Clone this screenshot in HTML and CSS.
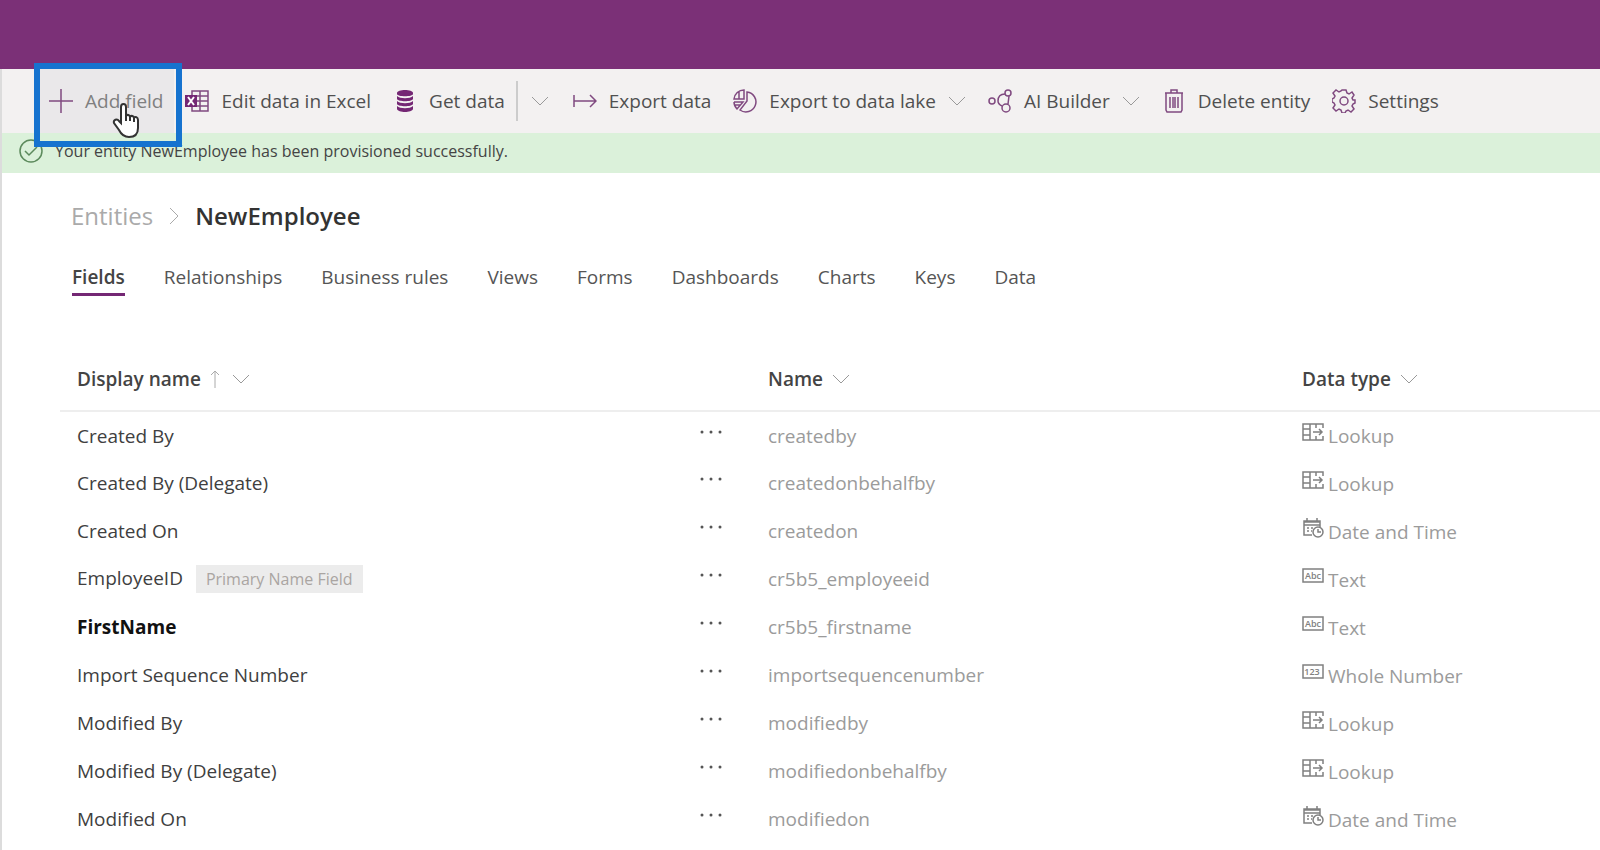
FILE: index.html
```
<!DOCTYPE html>
<html lang="en">
<head>
  <meta charset="UTF-8">
  <meta name="viewport" content="width=device-width, initial-scale=1.0">
  <title>NewEmployee - Entities</title>
  <link rel="stylesheet" href="styles.css">
</head>
<body>

  <!-- Shared icons -->
  <svg class="icon-defs" aria-hidden="true">
    <symbol id="i-chevron" viewBox="0 0 18 10"><path d="M1 1l8 8 8-8"/></symbol>
    <symbol id="i-dots" viewBox="0 0 22 4"><circle cx="2" cy="2" r="1.5"/><circle cx="11" cy="2" r="1.5"/><circle cx="20" cy="2" r="1.5"/></symbol>
    <symbol id="i-lookup" viewBox="0 0 22 18">
      <path d="M21 5V1H1v16h20v-4M1 6h7M1 12h7M8 1v16M14 1v4M14 13v4M11 9h9M17 6l3 3-3 3"/>
    </symbol>
    <symbol id="i-date" viewBox="0 0 22 20">
      <path d="M10 17H2V3h16v6M2 4h16M2 7h16M5 0v4M15 0v4M5 10h2M9 10h2M5 13h2M9 13h1"/>
      <circle cx="16" cy="14" r="5"/><path d="M16 11v3h3"/>
    </symbol>
    <symbol id="i-text" viewBox="0 0 22 16"><rect x="1" y="1" width="20" height="13"/><text x="11" y="11" text-anchor="middle">Abc</text></symbol>
    <symbol id="i-number" viewBox="0 0 22 16"><rect x="1" y="1" width="20" height="13"/><text x="10" y="11" text-anchor="middle">123</text></symbol>
  </svg>

  <header class="top-bar"></header>

  <div class="page">
    <div class="toolbar">
      <button class="tool add-field">
        <svg class="icon" viewBox="0 0 24 24"><path d="M12 0v24M0 12h24"/></svg>
        Add field
      </button>
      <button class="tool">
        <svg class="icon" viewBox="0 0 24 24">
          <path d="M7 6V2h16v20H7v-4M7 7h16M7 12h16M7 17h16M15 2v20"/>
          <path class="solid" d="M0 6h12v12H0z"/><path class="cut" d="M3 8l6 8M9 8l-6 8"/>
        </svg>
        Edit data in Excel
      </button>
      <div class="split">
        <button class="tool">
          <svg class="icon" viewBox="0 0 24 24">
            <path class="solid" d="M4 4c0-4 16-4 16 0v1c0 3-16 3-16 0z"/>
            <path class="solid" d="M4 7c3 3 13 3 16 0v3c-1 3-15 3-16 0zM4 12c3 3 13 3 16 0v3c-1 3-15 3-16 0zM4 17c3 3 13 3 16 0v3c-1 4-15 4-16 0z"/>
          </svg>
          Get data
        </button>
        <button class="more" aria-label="More data options"><svg class="chevron"><use href="#i-chevron"/></svg></button>
      </div>
      <button class="tool">
        <svg class="icon" viewBox="0 0 24 24"><path d="M1 6v12M1 12h22M17 6l6 6-6 6"/></svg>
        Export data
      </button>
      <button class="tool">
        <svg class="icon" viewBox="0 0 24 24">
          <path d="M14 3a10 10 0 1 1-7 18l7-9z"/>
          <path d="M11 1A10 10 0 0 0 1 10h10zM6 3v7M1 13h9l-6 7c-2-2-3-4-3-7M2 16h5"/>
        </svg>
        Export to data lake
        <svg class="chevron"><use href="#i-chevron"/></svg>
      </button>
      <button class="tool">
        <svg class="icon" viewBox="0 0 24 24">
          <circle cx="4" cy="12" r="3"/><circle cx="20" cy="4" r="3"/><circle cx="18" cy="19" r="4"/>
          <path d="M17 5c-5 0-7 3-7 7 0 3 2 4 4 5M21 7l-1 8"/>
        </svg>
        AI Builder
        <svg class="chevron"><use href="#i-chevron"/></svg>
      </button>
      <button class="tool">
        <svg class="icon" viewBox="0 0 24 24"><path d="M3 4h18M9 4V1h6v3M4 4v17l1 2h14l1-2V4M8 8v11M11 8v11M13 8v11M16 8v11"/></svg>
        Delete entity
      </button>
      <button class="tool">
        <svg class="icon" viewBox="0 0 24 24">
          <path d="M10 1h4l1 3 2 1 3-2 2 3-2 3 1 2 2 0v3l-2 1-1 2 2 3-3 3-3-2-2 1-1 2h-3l-1-3-2-1-3 2-3-3 2-3-1-2-2-1v-3l2-1 1-2-2-3 3-3 3 2 2-1z"/>
          <circle cx="12" cy="12" r="4"/>
        </svg>
        Settings
      </button>

      <!-- Highlight and pointer lie over the command bar -->
      <div class="highlight"></div>
      <svg class="pointer" viewBox="0 0 28 36">
        <path d="M9 20V4c0-4 5-4 5 0v9c1-2 4-1 4 1 1-2 4-1 4 1 1-2 4-1 4 2v8c0 6-3 9-9 9-5 0-8-3-10-7l-5-7c-1-3 3-5 5-2z"/>
        <path d="M14 12v6M18 14v4M22 15v4"/>
      </svg>
    </div>

    <div class="banner" role="status">
      <svg class="check" viewBox="0 0 24 24"><circle cx="12" cy="12" r="11"/><path d="M6 12l4 4 8-8"/></svg>
      Your entity NewEmployee has been provisioned successfully.
    </div>

    <main>
      <nav class="breadcrumb" aria-label="Breadcrumb">
        <a href="#">Entities</a>
        <svg class="crumb-arrow" viewBox="0 0 12 18"><path d="M2 1l8 8-8 8"/></svg>
        <h1>NewEmployee</h1>
      </nav>

      <nav class="tabs" aria-label="Entity sections">
        <a href="#" class="active">Fields</a>
        <a href="#">Relationships</a>
        <a href="#">Business rules</a>
        <a href="#">Views</a>
        <a href="#">Forms</a>
        <a href="#">Dashboards</a>
        <a href="#">Charts</a>
        <a href="#">Keys</a>
        <a href="#">Data</a>
      </nav>

      <table class="fields">
        <colgroup>
          <col><col class="col-menu"><col class="col-name"><col class="col-type">
        </colgroup>
        <thead>
          <tr>
            <th>Display name
              <svg class="sort" viewBox="0 0 10 18"><path d="M5 18V1M1 5l4-4 4 4"/></svg>
              <svg class="chevron"><use href="#i-chevron"/></svg></th>
            <th></th>
            <th>Name <svg class="chevron"><use href="#i-chevron"/></svg></th>
            <th>Data type <svg class="chevron"><use href="#i-chevron"/></svg></th>
          </tr>
        </thead>
        <tbody>
          <tr>
            <td>Created By</td>
            <td><button class="dots" aria-label="More"><svg><use href="#i-dots"/></svg></button></td>
            <td>createdby</td>
            <td><svg class="type"><use href="#i-lookup"/></svg>Lookup</td>
          </tr>
          <tr>
            <td>Created By (Delegate)</td>
            <td><button class="dots" aria-label="More"><svg><use href="#i-dots"/></svg></button></td>
            <td>createdonbehalfby</td>
            <td><svg class="type"><use href="#i-lookup"/></svg>Lookup</td>
          </tr>
          <tr>
            <td>Created On</td>
            <td><button class="dots" aria-label="More"><svg><use href="#i-dots"/></svg></button></td>
            <td>createdon</td>
            <td><svg class="type"><use href="#i-date"/></svg>Date and Time</td>
          </tr>
          <tr>
            <td>EmployeeID <span class="tag">Primary Name Field</span></td>
            <td><button class="dots" aria-label="More"><svg><use href="#i-dots"/></svg></button></td>
            <td>cr5b5_employeeid</td>
            <td><svg class="type"><use href="#i-text"/></svg>Text</td>
          </tr>
          <tr class="custom">
            <td>FirstName</td>
            <td><button class="dots" aria-label="More"><svg><use href="#i-dots"/></svg></button></td>
            <td>cr5b5_firstname</td>
            <td><svg class="type"><use href="#i-text"/></svg>Text</td>
          </tr>
          <tr>
            <td>Import Sequence Number</td>
            <td><button class="dots" aria-label="More"><svg><use href="#i-dots"/></svg></button></td>
            <td>importsequencenumber</td>
            <td><svg class="type"><use href="#i-number"/></svg>Whole Number</td>
          </tr>
          <tr>
            <td>Modified By</td>
            <td><button class="dots" aria-label="More"><svg><use href="#i-dots"/></svg></button></td>
            <td>modifiedby</td>
            <td><svg class="type"><use href="#i-lookup"/></svg>Lookup</td>
          </tr>
          <tr>
            <td>Modified By (Delegate)</td>
            <td><button class="dots" aria-label="More"><svg><use href="#i-dots"/></svg></button></td>
            <td>modifiedonbehalfby</td>
            <td><svg class="type"><use href="#i-lookup"/></svg>Lookup</td>
          </tr>
          <tr>
            <td>Modified On</td>
            <td><button class="dots" aria-label="More"><svg><use href="#i-dots"/></svg></button></td>
            <td>modifiedon</td>
            <td><svg class="type"><use href="#i-date"/></svg>Date and Time</td>
          </tr>
        </tbody>
      </table>
    </main>
  </div>

</body>
</html>
```
FILE: styles.css
```
* {
  box-sizing: border-box;
}

body {
  display: flex;
  flex-direction: column;
  min-height: 100vh;
  margin: 0;
  font-family: "Open Sans", "Noto Sans", sans-serif;
  font-size: 19px;
  line-height: 26px;
  color: #444;
  background-color: #fff;
}

button {
  font: inherit;
  color: inherit;
  background: none;
  border: none;
  padding: 0;
  cursor: pointer;
}

a {
  color: inherit;
  text-decoration: none;
}

svg {
  flex: none;
  fill: none;
  stroke: currentColor;
}

.icon-defs {
  display: none;
}

.top-bar {
  height: 69px;
  background-color: #7b3077;
}

.page {
  flex: 1;
  border-left: 2px solid #dcdcdc;
}

/* Command bar */
.toolbar {
  position: relative;
  display: flex;
  height: 64px;
  padding-left: 36px;
  background-color: #f3f1f1;
  color: #505050;
  white-space: nowrap;
}

.tool {
  display: flex;
  align-items: center;
  gap: 12px;
  padding: 0 11px;
}

.add-field {
  background-color: #eae8ea;
  color: #808080;
}

.icon {
  width: 24px;
  height: 24px;
  color: #804a80;
  stroke-width: 1.5;
}

.icon .solid {
  fill: #742774;
  stroke: none;
}

.icon .cut {
  stroke: #fff;
  stroke-width: 2;
}

.chevron {
  width: 18px;
  height: 10px;
  color: #999;
}

.split {
  display: flex;
  align-items: center;
}

.split .more {
  display: flex;
  align-items: center;
  height: 40px;
  padding: 0 13px;
  border-left: 2px solid #ccc;
}

.highlight {
  position: absolute;
  top: -6px;
  left: 32px;
  width: 148px;
  height: 84px;
  border: 6px solid #1673cf;
}

.pointer {
  position: absolute;
  top: 34px;
  left: 110px;
  width: 28px;
  height: 36px;
  fill: #fff;
  stroke: #333;
  stroke-width: 2;
}

/* Status message */
.banner {
  display: flex;
  align-items: center;
  gap: 12px;
  height: 40px;
  padding: 0 17px 4px;
  font-size: 16px;
  background-color: #dbf1da;
}

.check {
  width: 24px;
  height: 24px;
  color: #5c8a5c;
  stroke-width: 1.5;
}

main {
  padding-left: 58px;
}

.breadcrumb {
  display: flex;
  align-items: center;
  gap: 15px;
  padding: 27px 0 0 11px;
  font-size: 24px;
  line-height: 32px;
  color: #aaa;
}

.breadcrumb h1 {
  margin: 0;
  font-size: 24px;
  font-weight: 600;
  color: #333;
}

.crumb-arrow {
  width: 12px;
  height: 18px;
}

.tabs {
  display: flex;
  gap: 39px;
  padding: 32px 0 0 12px;
  color: #555;
}

.tabs a {
  padding-bottom: 3px;
  border-bottom: 3px solid transparent;
}

.tabs .active {
  font-weight: 600;
  color: #444;
  border-color: #742774;
}

/* Field list */
.fields {
  width: 100%;
  margin-top: 51px;
  table-layout: fixed;
  border-collapse: collapse;
}

.col-menu {
  width: 68px;
}

.col-name {
  width: 534px;
}

.col-type {
  width: 315px;
}

.fields th {
  height: 64px;
  padding: 0 0 0 17px;
  border-bottom: 2px solid #eee;
  font-weight: 600;
  text-align: left;
}

.fields th .chevron {
  margin-left: 4px;
  vertical-align: 2px;
}

.sort {
  width: 10px;
  height: 18px;
  margin: 0 3px 0 4px;
  color: #aaa;
  vertical-align: -2px;
}

.fields td {
  height: 48px;
  padding: 0 0 0 17px;
  color: #9b9b9b;
  white-space: nowrap;
}

.fields td:first-child {
  color: #404040;
}

.fields .custom td:first-child {
  font-weight: 700;
  color: #111;
}

.tag {
  display: inline-block;
  margin-left: 8px;
  padding: 0 10px;
  font-size: 16px;
  line-height: 28px;
  color: #aaa5a2;
  background-color: #ececec;
}

.dots {
  display: flex;
  height: 12px;
}

.dots svg {
  width: 22px;
  height: 4px;
  fill: #555;
  stroke: none;
}

.type {
  width: 22px;
  height: 20px;
  margin-right: 4px;
  color: #808080;
  vertical-align: 1px;
  stroke-width: 1.5;
}

symbol text {
  font-size: 9px;
  font-weight: 600;
  fill: #808080;
  stroke: none;
}
```
